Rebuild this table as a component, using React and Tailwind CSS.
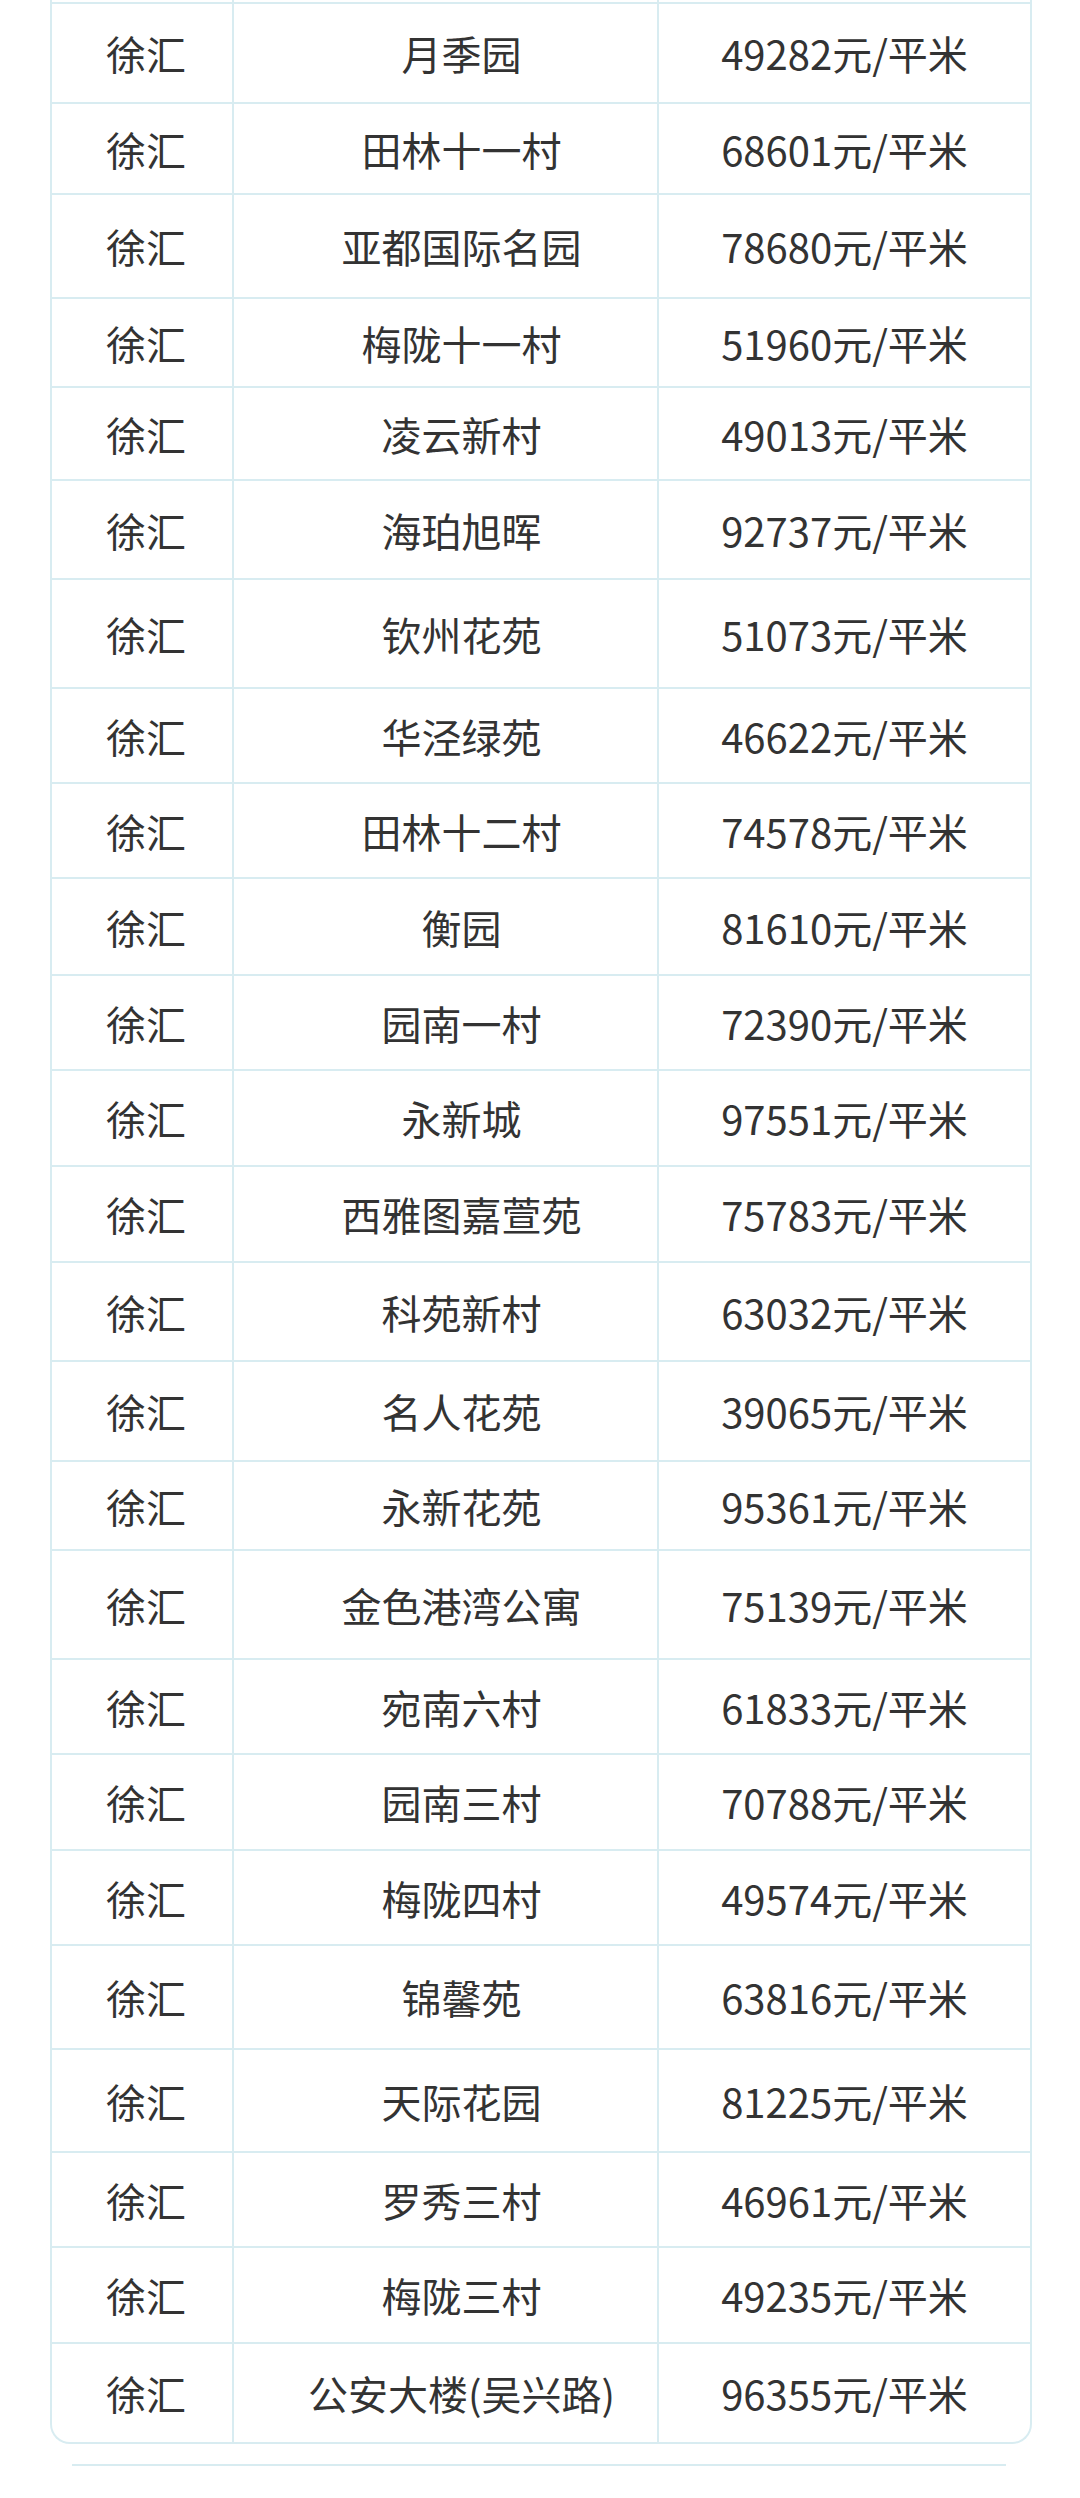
import React from 'react';

const rows = [
  { name: '月季园', price: '49282', h: 'h-[100px]' },
  { name: '田林十一村', price: '68601', h: 'h-[91px]' },
  { name: '亚都国际名园', price: '78680', h: 'h-[104px]' },
  { name: '梅陇十一村', price: '51960', h: 'h-[89px]' },
  { name: '凌云新村', price: '49013', h: 'h-[93px]' },
  { name: '海珀旭晖', price: '92737', h: 'h-[99px]' },
  { name: '钦州花苑', price: '51073', h: 'h-[109px]' },
  { name: '华泾绿苑', price: '46622', h: 'h-[95px]' },
  { name: '田林十二村', price: '74578', h: 'h-[95px]' },
  { name: '衡园', price: '81610', h: 'h-[97px]' },
  { name: '园南一村', price: '72390', h: 'h-[95px]' },
  { name: '永新城', price: '97551', h: 'h-[96px]' },
  { name: '西雅图嘉萱苑', price: '75783', h: 'h-[96px]' },
  { name: '科苑新村', price: '63032', h: 'h-[99px]' },
  { name: '名人花苑', price: '39065', h: 'h-[100px]' },
  { name: '永新花苑', price: '95361', h: 'h-[89px]' },
  { name: '金色港湾公寓', price: '75139', h: 'h-[109px]' },
  { name: '宛南六村', price: '61833', h: 'h-[95px]' },
  { name: '园南三村', price: '70788', h: 'h-[96px]' },
  { name: '梅陇四村', price: '49574', h: 'h-[95px]' },
  { name: '锦馨苑', price: '63816', h: 'h-[104px]' },
  { name: '天际花园', price: '81225', h: 'h-[103px]' },
  { name: '罗秀三村', price: '46961', h: 'h-[95px]' },
  { name: '梅陇三村', price: '49235', h: 'h-[96px]' },
  { name: '公安大楼(吴兴路)', price: '96355', h: 'h-[100px]' },
];

const PriceTable = () => {
  return (
    <div className="ml-[50px] w-[982px] border-x-2 border-b-2 border-[#d8ecf1] rounded-b-[20px] overflow-hidden">
      {/* sliver of the row above */}
      <div className="h-[2px] grid grid-cols-[180px_2px_423px_2px_1fr]">
        <div />
        <div className="bg-[#d8ecf1]" />
        <div />
        <div className="bg-[#d8ecf1]" />
        <div />
      </div>
      {rows.map((row) => (
        <div
          key={row.name}
          className={`${row.h} border-t-2 border-[#d8ecf1] grid grid-cols-[180px_2px_423px_2px_1fr]`}
        >
          <div className="flex items-center justify-center pl-2">徐汇</div>
          <div className="bg-[#d8ecf1]" />
          <div className="flex items-center justify-center pl-8">{row.name}</div>
          <div className="bg-[#d8ecf1]" />
          <div className="flex items-center justify-center">{row.price}元/平米</div>
        </div>
      ))}
    </div>
  );
};

export default function App() {
  return (
    <div
      className="w-[1080px] h-[2498px] bg-white text-[40px] leading-none text-[#333333]"
      style={{ fontFamily: '"Noto Sans CJK SC", "Noto Sans", sans-serif' }}
    >
      <PriceTable />
      <div className="mt-[20px] ml-[72px] w-[934px] h-[2px] bg-[#d8ecf1]" />
    </div>
  );
}
